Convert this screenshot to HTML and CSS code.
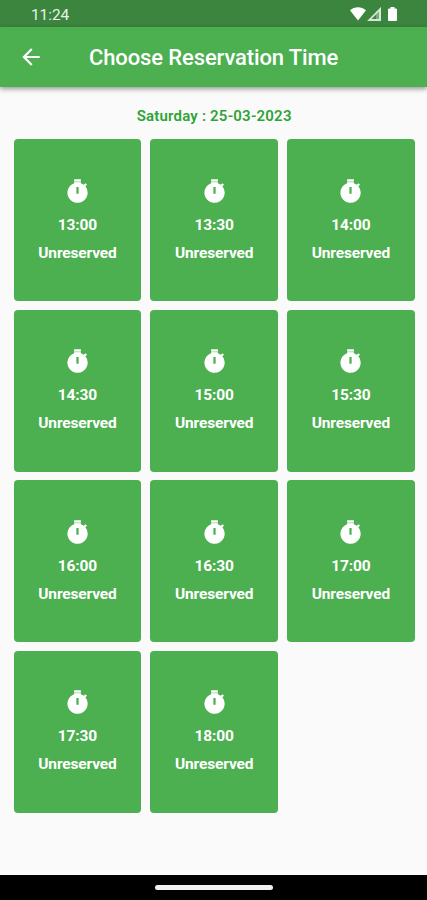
FILE: index.html
```html
<!DOCTYPE html>
<html lang="en">
<head>
    <meta charset="UTF-8">
    <meta name="viewport" content="width=device-width, initial-scale=1.0">
    <title>Choose Reservation Time</title>
    <link rel="stylesheet" href="styles.css">
</head>
<body>

    <svg width="0" height="0" class="symbols">
        <symbol id="timer" viewBox="0 0 24 24">
            <path fill-rule="evenodd" d="M9 1h6v3.600c1 .3 1.900.8 2.600 1.400l1.450-1.440c.51.420.98.900 1.410 1.410L19.030 7.390A9 9 0 1 1 9 4.600zM11 8v6h2V8z"/>
            <path class="gap" d="M8.500 3h7v.8h-7z"/>
        </symbol>
    </svg>

    <div class="status-bar">
        <span class="clock">11:24</span>
        <div class="status-icons">
            <svg class="wifi" viewBox="0 0 16 14"><path d="M0 3.2C4.5-.7 11.500-.7 16 3.200L8 13.500z"/></svg>
            <svg class="signal" viewBox="0 0 14 14"><path class="fade" d="M9 5l5-5v14H9z"/><path d="M14 0v14H0zM12 4.500L4.500 12H12z" fill-rule="evenodd"/></svg>
            <svg class="battery" viewBox="0 0 9 14"><path d="M2.500 0h4v1.400H8a1 1 0 0 1 1 1V13a1 1 0 0 1-1 1H1a1 1 0 0 1-1-1V2.400a1 1 0 0 1 1-1h1.500z"/></svg>
        </div>
    </div>

    <header class="app-bar">
        <svg class="back" viewBox="0 0 24 24"><path d="M20 11H7.830l5.590-5.590L12 4l-8 8 8 8 1.410-1.410L7.830 13H20v-2z"/></svg>
        <h1>Choose Reservation Time</h1>
    </header>

    <main>
        <p class="date">Saturday : 25-03-2023</p>
        <div class="slots">
            <div class="slot"><svg><use href="#timer"/></svg><span>13:00</span><span>Unreserved</span></div>
            <div class="slot"><svg><use href="#timer"/></svg><span>13:30</span><span>Unreserved</span></div>
            <div class="slot"><svg><use href="#timer"/></svg><span>14:00</span><span>Unreserved</span></div>
            <div class="slot"><svg><use href="#timer"/></svg><span>14:30</span><span>Unreserved</span></div>
            <div class="slot"><svg><use href="#timer"/></svg><span>15:00</span><span>Unreserved</span></div>
            <div class="slot"><svg><use href="#timer"/></svg><span>15:30</span><span>Unreserved</span></div>
            <div class="slot"><svg><use href="#timer"/></svg><span>16:00</span><span>Unreserved</span></div>
            <div class="slot"><svg><use href="#timer"/></svg><span>16:30</span><span>Unreserved</span></div>
            <div class="slot"><svg><use href="#timer"/></svg><span>17:00</span><span>Unreserved</span></div>
            <div class="slot"><svg><use href="#timer"/></svg><span>17:30</span><span>Unreserved</span></div>
            <div class="slot"><svg><use href="#timer"/></svg><span>18:00</span><span>Unreserved</span></div>
        </div>
    </main>

    <div class="nav-bar"><div class="pill"></div></div>

</body>
</html>
```
FILE: styles.css
```css
* {
    box-sizing: border-box;
}
body {
    margin: 0;
    height: 900px;
    display: flex;
    flex-direction: column;
    overflow: hidden;
    background-color: #fafafa;
    font-family: Roboto, sans-serif;
    color: #fff;
}
svg {
    display: block;
    fill: currentColor;
}
.symbols {
    position: absolute;
}
.gap {
    fill: #4caf50;
    opacity: 0.5;
}
.status-bar {
    height: 26.5px;
    flex: none;
    display: flex;
    align-items: center;
    justify-content: space-between;
    padding: 2px 30px 0 31px;
    background-color: #3b853e;
}
.clock {
    padding-top: 1px;
    font-size: 15.5px;
    line-height: 20px;
    letter-spacing: -0.1px;
    color: #e8f2e8;
}
.status-icons {
    display: flex;
    align-items: center;
}
.wifi {
    width: 16px;
    height: 14px;
}
.signal {
    width: 14px;
    height: 14px;
    margin-left: 1.5px;
    color: #d8e8d8;
}
.fade {
    opacity: 0.4;
}
.battery {
    width: 9px;
    height: 14px;
    margin-left: 7px;
}
.app-bar {
    height: 60.5px;
    flex: none;
    display: flex;
    align-items: center;
    padding: 1px 0 0 18px;
    background-color: #4caf50;
    box-shadow: 0 2px 5px rgba(0, 0, 0, 0.4);
}
.back {
    width: 26px;
    height: 26px;
}
h1 {
    margin: 2px 0 0 45px;
    font-size: 22px;
    font-weight: 500;
    line-height: 28px;
    letter-spacing: -0.12px;
    white-space: nowrap;
}
main {
    flex: 1;
    padding: 18.7px 12.2px 0 13.5px;
}
.date {
    margin: 0 0 13.5px;
    font-size: 15px;
    font-weight: 600;
    line-height: 20px;
    letter-spacing: 0.2px;
    text-align: center;
    color: #2fa336;
}
.slots {
    display: grid;
    grid-template-columns: repeat(3, 1fr);
    grid-auto-rows: 162px;
    gap: 8.5px 8.8px;
}
.slot {
    display: flex;
    flex-direction: column;
    align-items: center;
    padding-top: 38.5px;
    border-radius: 4px;
    background-color: #4caf50;
    font-size: 15.5px;
    font-weight: 700;
    line-height: 20px;
    letter-spacing: -0.15px;
}
.slot svg {
    width: 27px;
    height: 27px;
}
.slot span {
    margin-top: 8.3px;
}
.slot svg + span {
    margin-top: 10px;
}
.nav-bar {
    height: 25.5px;
    flex: none;
    display: flex;
    justify-content: center;
    padding-top: 10px;
    background-color: #000;
}
.pill {
    width: 118px;
    height: 5.5px;
    border-radius: 3px;
    background-color: #f0f0f0;
}
```
